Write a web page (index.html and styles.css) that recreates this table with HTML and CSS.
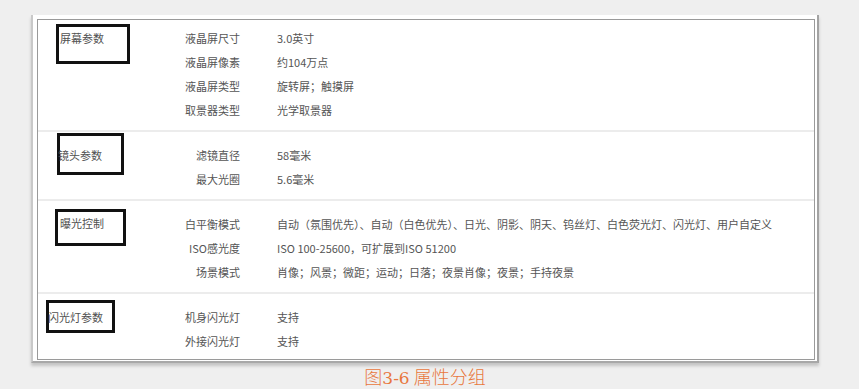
FILE: index.html
```html
<!DOCTYPE html>
<html lang="zh-CN">
<head>
<meta charset="utf-8">
<title>属性分组</title>
<link rel="stylesheet" href="styles.css">
</head>
<body>
<div class="figure">
  <div class="sheet">
    <div class="table">
      <section class="group group-1">
        <div class="tagcol"><div class="tag tag-1">屏幕参数</div></div>
        <div class="rows">
          <div class="k">液晶屏尺寸</div><div class="v">3.0英寸</div>
          <div class="k">液晶屏像素</div><div class="v">约104万点</div>
          <div class="k">液晶屏类型</div><div class="v">旋转屏；触摸屏</div>
          <div class="k">取景器类型</div><div class="v">光学取景器</div>
        </div>
      </section>
      <section class="group group-2">
        <div class="tagcol"><div class="tag tag-2">镜头参数</div></div>
        <div class="rows">
          <div class="k">滤镜直径</div><div class="v">58毫米</div>
          <div class="k">最大光圈</div><div class="v">5.6毫米</div>
        </div>
      </section>
      <section class="group group-3">
        <div class="tagcol"><div class="tag tag-3">曝光控制</div></div>
        <div class="rows">
          <div class="k">白平衡模式</div><div class="v">自动（氛围优先）、自动（白色优先）、日光、阴影、阴天、钨丝灯、白色荧光灯、闪光灯、用户自定义</div>
          <div class="k">ISO感光度</div><div class="v">ISO 100-25600，可扩展到ISO 51200</div>
          <div class="k">场景模式</div><div class="v">肖像；风景；微距；运动；日落；夜景肖像；夜景；手持夜景</div>
        </div>
      </section>
      <section class="group group-4">
        <div class="tagcol"><div class="tag tag-4">闪光灯参数</div></div>
        <div class="rows">
          <div class="k">机身闪光灯</div><div class="v">支持</div>
          <div class="k">外接闪光灯</div><div class="v">支持</div>
        </div>
      </section>
    </div>
  </div>
  <p class="caption"><span class="fig">图</span><span class="num">3-6</span> 属性分组</p>
</div>
</body>
</html>
```

FILE: styles.css
```css
html, body {
  margin: 0;
  padding: 0;
  background: #efefef;
}

body {
  font-family: "Noto Sans CJK SC", "DejaVu Sans", sans-serif;
}

.figure {
  width: 788px;
  margin-left: 31px;
  padding-top: 15px;
}

.sheet {
  box-sizing: border-box;
  width: 788px;
  background: #ffffff;
  border-left: 2px solid #c9c9c9;
  border-right: 2px solid #a3a3a3;
  border-bottom: 2px solid #a8a8a8;
  padding: 4px 2px 1px 4px;
  box-shadow: 0 3px 3px rgba(0, 0, 0, 0.18);
}

.table {
  border: 1px solid #9a9a9a;
  background: #fff;
}

.group {
  display: flex;
  align-items: flex-start;
}

.group + .group {
  border-top: 2px solid #ececec;
}

.tagcol {
  flex: none;
  width: 120px;
}

.tag {
  box-sizing: border-box;
  border: 3px solid #111;
  font-size: 11px;
  line-height: 14px;
  color: #505050;
  white-space: nowrap;
}

.tag-1 { margin: 4px 0 0 18px; width: 74px; height: 40px; padding: 4px 0 0 1px; }
.tag-2 { margin: 1px 0 0 19px; width: 67px; height: 42px; padding: 12px 0 0 0; text-indent: -2px; }
.tag-3 { margin: 8px 0 0 17px; width: 71px; height: 37px; padding: 4px 0 0 2px; }
.tag-4 { margin: 6px 0 0 8px; width: 69px; height: 33px; padding: 7px 0 0 0; text-indent: -1px; }

.rows {
  flex: 1;
  display: grid;
  grid-template-columns: 82px 1fr;
  column-gap: 37px;
  font-size: 11px;
  line-height: 24px;
  color: #555;
  padding: 11px 0 8px;
}

.group-1 .rows { padding-top: 6px; }
.group-4 .rows { padding-bottom: 6px; }

.k {
  text-align: right;
  white-space: nowrap;
}

.v {
  white-space: nowrap;
}

.caption {
  margin: 2px 0 0;
  text-align: center;
  font-size: 18px;
  line-height: 22px;
  color: #e8773d;
  font-family: "Noto Sans CJK SC", sans-serif;
  font-weight: 300;
}

.caption .num {
  font-family: "DejaVu Serif", "Liberation Serif", serif;
  font-size: 17px;
}
```
